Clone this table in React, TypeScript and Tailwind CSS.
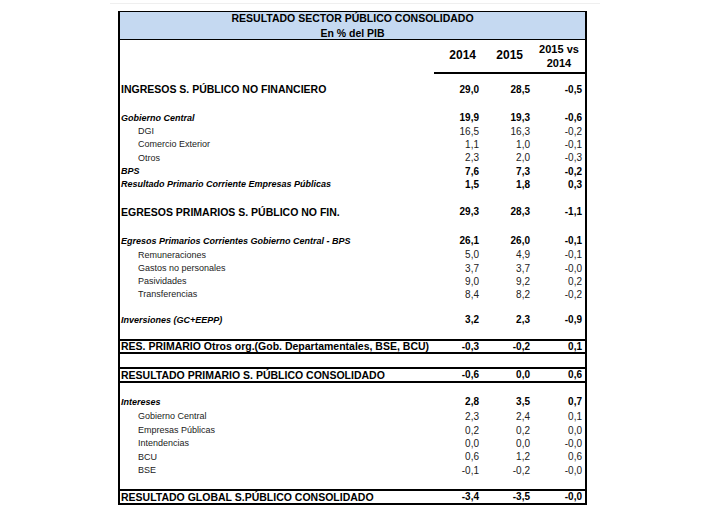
import React from "react";

type Kind = "main" | "ital" | "sub" | "box" | "sp";
type R = { k: Kind; l?: string; v?: [string, string, string]; h: number };

const H: Record<number, string> = {
  9: "h-[9px]",
  12: "h-[12px]",
  13: "h-[13px]",
  14: "h-[14px]",
  15: "h-[15px]",
  16: "h-[16px]",
};

const rows: R[] = [
  { k: "sp", h: 9 },
  { k: "main", l: "INGRESOS S. PÚBLICO NO FINANCIERO", v: ["29,0", "28,5", "-0,5"], h: 13 },
  { k: "sp", h: 15 },
  { k: "ital", l: "Gobierno Central", v: ["19,9", "19,3", "-0,6"], h: 14 },
  { k: "sub", l: "DGI", v: ["16,5", "16,3", "-0,2"], h: 13 },
  { k: "sub", l: "Comercio Exterior", v: ["1,1", "1,0", "-0,1"], h: 13 },
  { k: "sub", l: "Otros", v: ["2,3", "2,0", "-0,3"], h: 14 },
  { k: "ital", l: "BPS", v: ["7,6", "7,3", "-0,2"], h: 13 },
  { k: "ital", l: "Resultado Primario Corriente Empresas Públicas", v: ["1,5", "1,8", "0,3"], h: 13 },
  { k: "sp", h: 14 },
  { k: "main", l: "EGRESOS PRIMARIOS S. PÚBLICO NO FIN.", v: ["29,3", "28,3", "-1,1"], h: 14 },
  { k: "sp", h: 15 },
  { k: "ital", l: "Egresos Primarios Corrientes Gobierno Central - BPS", v: ["26,1", "26,0", "-0,1"], h: 14 },
  { k: "sub", l: "Remuneraciones", v: ["5,0", "4,9", "-0,1"], h: 14 },
  { k: "sub", l: "Gastos no personales", v: ["3,7", "3,7", "-0,0"], h: 13 },
  { k: "sub", l: "Pasividades", v: ["9,0", "9,2", "0,2"], h: 13 },
  { k: "sub", l: "Transferencias", v: ["8,4", "8,2", "-0,2"], h: 13 },
  { k: "sp", h: 12 },
  { k: "ital", l: "Inversiones (GC+EEPP)", v: ["3,2", "2,3", "-0,9"], h: 14 },
  { k: "sp", h: 12 },
  { k: "box", l: "RES. PRIMARIO Otros org.(Gob. Departamentales, BSE, BCU)", v: ["-0,3", "-0,2", "0,1"], h: 15 },
  { k: "sp", h: 13 },
  { k: "box", l: "RESULTADO PRIMARIO S. PÚBLICO CONSOLIDADO", v: ["-0,6", "0,0", "0,6"], h: 16 },
  { k: "sp", h: 12 },
  { k: "ital", l: "Intereses", v: ["2,8", "3,5", "0,7"], h: 14 },
  { k: "sub", l: "Gobierno Central", v: ["2,3", "2,4", "0,1"], h: 15 },
  { k: "sub", l: "Empresas Públicas", v: ["0,2", "0,2", "0,0"], h: 13 },
  { k: "sub", l: "Intendencias", v: ["0,0", "0,0", "-0,0"], h: 13 },
  { k: "sub", l: "BCU", v: ["0,6", "1,2", "0,6"], h: 14 },
  { k: "sub", l: "BSE", v: ["-0,1", "-0,2", "-0,0"], h: 13 },
  { k: "sp", h: 12 },
  { k: "box", l: "RESULTADO GLOBAL S.PÚBLICO CONSOLIDADO", v: ["-3,4", "-3,5", "-0,0"], h: 16 },
];

function Row({ r }: { r: R }) {
  if (r.k === "sp") return <div className={H[r.h]} />;
  const labelCls =
    r.k === "main" || r.k === "box"
      ? "font-bold text-[10.5px] text-black pl-px"
      : r.k === "ital"
      ? "font-bold italic text-[9px] text-black pl-px"
      : "text-[9px] text-[#222] pl-[18px]";
  const numCls = r.k === "sub" ? "text-[10px] text-[#222]" : "font-bold text-[10px] text-black";
  const boxCls = r.k === "box" ? "border-y-2 border-black" : "";
  const v = r.v!;
  return (
    <div className={`grid grid-cols-[314px_48px_51px_52px] ${H[r.h]} ${boxCls}`}>
      <div className={`flex items-center whitespace-nowrap leading-none ${labelCls}`}>{r.l}</div>
      <div className={`flex items-center justify-end pr-[3px] leading-none ${numCls}`}>{v[0]}</div>
      <div className={`flex items-center justify-end pr-[3px] leading-none ${numCls}`}>{v[1]}</div>
      <div className={`flex items-center justify-end pr-[3px] leading-none ${numCls}`}>{v[2]}</div>
    </div>
  );
}

export default function App() {
  return (
    <div
      className="w-[720px] h-[519px] bg-white overflow-hidden"
      style={{ fontFamily: '"Liberation Sans", Arial, sans-serif' }}
    >
      <div className="ml-[110px] mt-[3px] h-px w-[490px] bg-[#efefef]" />
      <div className="ml-[118px] mt-[7px] w-[469px] border-x-2 border-black">
        <div className="border-y border-black bg-[#c5d9f1] h-[29px] text-center font-bold text-black text-[10.5px]">
          <div className="h-[12px] leading-[12px]">RESULTADO SECTOR PÚBLICO CONSOLIDADO</div>
          <div className="mt-[4px] h-[11px] leading-[11px]">En % del PIB</div>
        </div>
        <div className="grid grid-cols-[314px_48px_51px_52px] h-[34px] font-bold text-black">
          <div />
          <div className="border-b-2 border-black text-right pr-[6px] pt-[8px] text-[12px] leading-[14px]">2014</div>
          <div className="border-b-2 border-black text-right pr-[10px] pt-[8px] text-[12px] leading-[14px]">2015</div>
          <div className="border-b-2 border-black text-center pt-[2px] text-[11px] leading-[14px]">
            <div>2015 vs</div>
            <div>2014</div>
          </div>
        </div>
        {rows.map((r, i) => (
          <Row key={i} r={r} />
        ))}
      </div>
    </div>
  );
}
